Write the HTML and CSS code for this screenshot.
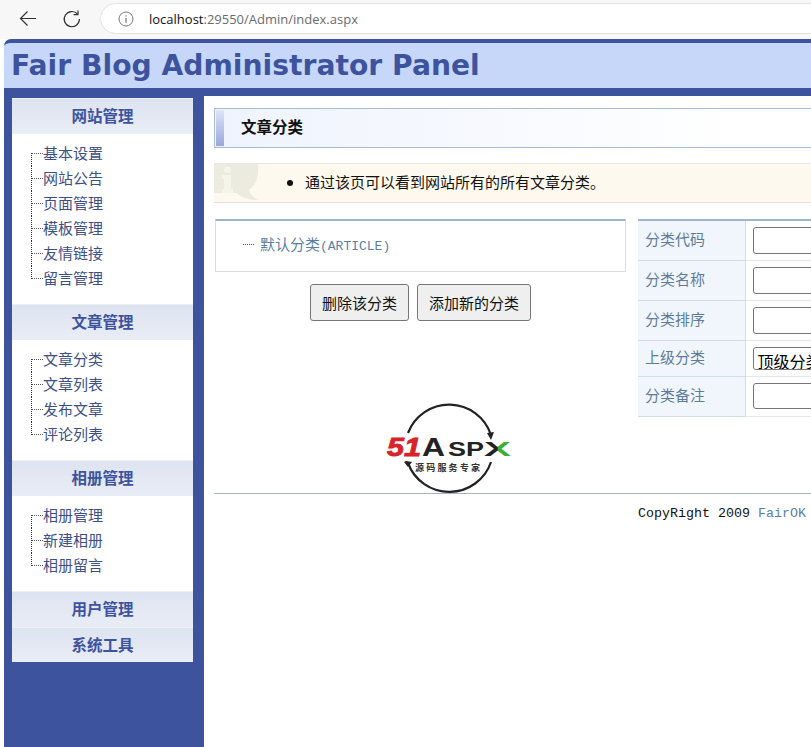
FILE: index.html
```html
<!DOCTYPE html>
<html lang="zh">
<head>
<meta charset="utf-8">
<title>Fair Blog Administrator Panel</title>
<link rel="stylesheet" href="styles.css">
</head>
<body>
<div class="toolbar">
  <svg class="nav-icon back" width="20" height="20" viewBox="0 0 20 20"><path d="M18 9.5H2.5M9.5 2.5l-7 7 7 7" fill="none" stroke="#333" stroke-width="1.2"/></svg>
  <svg class="nav-icon reload" width="20" height="20" viewBox="0 0 20 20"><path d="M15.6 5.2A7.6 7.6 0 1 0 17.4 10" fill="none" stroke="#333" stroke-width="1.2"/><path d="M16 1.5v4.2h-4.4" fill="none" stroke="#333" stroke-width="1.2"/></svg>
  <div class="address">
    <svg class="info" width="16" height="16" viewBox="0 0 16 16"><circle cx="8" cy="8" r="7" fill="none" stroke="#777" stroke-width="1"/><path d="M8 7v5M8 4.2v1.4" stroke="#777" stroke-width="1.2"/></svg>
    <span class="url"><span class="host">localhost</span>:29550/Admin/index.aspx</span>
  </div>
</div>
<div class="page">
  <header class="banner"><h1>Fair Blog Administrator Panel</h1></header>
  <div class="columns">
    <aside class="sidebar">
      <div class="menu">
        <h2 class="menu-title">网站管理</h2>
        <ul class="tree">
          <li>基本设置</li><li>网站公告</li><li>页面管理</li><li>模板管理</li><li>友情链接</li><li>留言管理</li>
        </ul>
        <h2 class="menu-title">文章管理</h2>
        <ul class="tree">
          <li>文章分类</li><li>文章列表</li><li>发布文章</li><li>评论列表</li>
        </ul>
        <h2 class="menu-title">相册管理</h2>
        <ul class="tree">
          <li>相册管理</li><li>新建相册</li><li>相册留言</li>
        </ul>
        <h2 class="menu-title">用户管理</h2>
        <h2 class="menu-title">系统工具</h2>
      </div>
    </aside>
    <main class="content">
      <div class="page-title"><span class="accent"></span><strong>文章分类</strong></div>
      <div class="notice">
        <svg class="notice-icon" width="46" height="38" viewBox="0 0 46 38"><path d="M0 0H44C45 10 43 21 35 26C36 30 39 33 44 36C35 36 27 33 22 29H0Z" fill="#ebebe0"/><rect x="10" y="3" width="7" height="6" rx="2" fill="#f6f5ea"/><path d="M8 11h9v14h2v4H8v-4h2V15H8z" fill="#f6f5ea"/></svg>
        <ul><li>通过该页可以看到网站所有的所有文章分类。</li></ul>
      </div>
      <div class="editor">
        <div class="left">
          <div class="tree-box"><span class="dash"></span><a>默认分类<span class="ascii">(ARTICLE)</span></a></div>
          <div class="actions"><button>删除该分类</button><button>添加新的分类</button></div>
          <svg class="logo" width="130" height="92" viewBox="0 0 130 92">
            <defs>
              <linearGradient id="x-fill" x1="0" x2="1" y1="0" y2="0">
                <stop offset="0.48" stop-color="#222"/><stop offset="0.52" stop-color="#3fae38"/>
              </linearGradient>
            </defs>
            <path d="M24 31A44 44 0 0 1 107 33" fill="none" stroke="#222" stroke-width="2.2"/>
            <path d="M103 31l4 7 3-8z" fill="#222"/>
            <path d="M107 60A44 44 0 0 1 24 61" fill="none" stroke="#222" stroke-width="2.2"/>
            <path d="M20 60l2-1 6 1-4 5z" fill="#222"/>
            <text x="3" y="54" textLength="34" lengthAdjust="spacingAndGlyphs" class="logo-51">51</text>
            <text x="38" y="54" textLength="23" lengthAdjust="spacingAndGlyphs" class="logo-a">A</text>
            <text x="64" y="54" textLength="36" lengthAdjust="spacingAndGlyphs" class="logo-sp">sp</text>
            <text x="100" y="54" textLength="27" lengthAdjust="spacingAndGlyphs" class="logo-x" fill="url(#x-fill)">x</text>
            <text x="31" y="69" class="logo-sub">源码服务专家</text>
          </svg>
        </div>
        <table class="form">
          <tr class="tall"><th>分类代码</th><td><input type="text"></td></tr>
          <tr class="tall"><th>分类名称</th><td><input type="text"></td></tr>
          <tr class="tall"><th>分类排序</th><td><input type="text"></td></tr>
          <tr class="short"><th>上级分类</th><td><select><option>顶级分类目录</option></select></td></tr>
          <tr class="tall last"><th>分类备注</th><td><input type="text"></td></tr>
        </table>
      </div>
      <footer class="copyright">CopyRight 2009 <a>FairOK</a></footer>
    </main>
  </div>
</div>
</body>
</html>
```
FILE: styles.css
```css
* { box-sizing: border-box; }
html, body { margin: 0; height: 747px; overflow: hidden; }
body { width: 811px; background: #fff; font-family: "Noto Sans CJK SC", sans-serif; }

.toolbar { height: 39px; background: #f7f7f7; display: flex; align-items: flex-start; position: relative; }
.nav-icon { flex: none; margin-top: 9px; }
.back { margin-left: 18px; }
.reload { margin-left: 24px; }
.address { width: 760px; flex: none; height: 31px; margin: 3px 0 0 18px; background: #fff; border: 1px solid #e3e3e3; border-radius: 16px; display: flex; align-items: center; padding-left: 17px; }
.url { margin-left: 15px; font: 13px "Open Sans", sans-serif; color: #6b6b6b; }
.host { color: #111; }

.page { width: 1100px; margin-left: 4px; }
.banner { height: 57px; background: #c6d7f9; border-top: 4px solid #3e539d; border-bottom: 8px solid #3e539d; border-top-left-radius: 7px; padding-left: 7px; }
.banner h1 { margin: 0; font: bold 28.2px/46px "DejaVu Sans", sans-serif; color: #3e539d; }

.columns { display: flex; height: 660px; }
.sidebar { width: 200px; flex: none; background: #3e539d; padding: 2px 11px 0 8px; }
.menu { background: #fff; }
.menu-title { margin: 0; height: 36px; font-size: 15.5px; line-height: 32px; font-weight: bold; text-align: center; color: #3e539d; background: linear-gradient(#dde3f0, #e9edf6); border-top: 1px solid #eef0f5; }
.menu-title:last-child { height: 35px; }
.tree { list-style: none; margin: 0; padding: 7px 0 13px 19px; }
.tree li { height: 25px; line-height: 24px; font-size: 15px; color: #3e4f85; padding-left: 12px; position: relative; }
.tree li::before { content: ""; position: absolute; left: 0; top: 12px; width: 12px; border-top: 1px dotted #555; }
.tree li::after { content: ""; position: absolute; left: 0; top: 0; height: 25px; border-left: 1px dotted #333; }
.tree li:first-child::after { top: 12px; height: 13px; }
.tree li:last-child::after { height: 13px; }

.content { width: 886px; flex: none; padding: 12px 0 0 10px; }
.page-title { height: 40px; border: 1px solid #a9bccf; background: linear-gradient(90deg, #eef3fd, #fff 60%); display: flex; align-items: center; padding: 1px; }
.accent { width: 8px; align-self: stretch; background: linear-gradient(#dfe4f7, #9aa6dc); }
.page-title strong { margin: 0 0 5px 17px; font-size: 15.5px; line-height: 22px; color: #111; }
.notice { height: 40px; margin-top: 15px; background: #fdf9ee; border-top: 1px solid #e8e8e0; border-bottom: 1px solid #e0e0d8; position: relative; display: flex; align-items: center; }
.notice-icon { position: absolute; left: 0; top: 0; }
.notice ul { margin: 0 0 3px; padding-left: 91px; font-size: 15px; line-height: 22px; color: #111; }

.editor { display: flex; margin-top: 16px; height: 275px; border-bottom: 1px solid #a4b4c2; }
.left { width: 424px; flex: none; padding-left: 1px; display: flex; flex-direction: column; }
.tree-box { flex: none; width: 411px; height: 53px; border: 1px solid #ddd; border-top: 2px solid #9fb5c7; padding: 0 0 5px 27px; display: flex; align-items: center; font: 15px/20px "Noto Sans CJK SC", sans-serif; }
.dash { width: 11px; border-top: 1px dotted #555; margin: 2px 6px 0 0; }
.tree-box a { color: #5b7fa3; }
.ascii { font: 13px "Liberation Mono", monospace; }
.actions { flex: none; display: flex; gap: 8px; margin: 12px 0 0 95px; }
.actions button { height: 37px; padding: 0 11px; font: 15px "Noto Sans CJK SC", sans-serif; color: #111; background: #efefef; border: 1px solid #767676; border-radius: 3px; }
.logo { margin: 81px 0 0 169px; flex: none; overflow: visible; }
.logo-51 { font: italic bold 25px "Liberation Sans", sans-serif; fill: #d8232a; stroke: #d8232a; stroke-width: 0.8px; }
.logo-a { font: bold 25px "Liberation Sans", sans-serif; fill: #222; }
.logo-sp { font: bold 20.6px "Liberation Sans", sans-serif; fill: #222; text-transform: uppercase; }
.logo-x { font: bold 20.6px "Liberation Sans", sans-serif; text-transform: uppercase; }
.logo-sub { font: bold 9px "Noto Sans CJK SC", sans-serif; fill: #333; letter-spacing: 2.2px; }

.form { width: 600px; flex: none; table-layout: fixed; height: 197px; border-collapse: collapse; border-top: 2px solid #9fb5c7; align-self: flex-start; }
.form th { width: 107px; padding: 0 0 3px 7px; text-align: left; font-weight: normal; font-size: 15px; line-height: 20px; color: #5e7b9a; background: #f1f6fd; border-right: 1px solid #d3dbe6; border-bottom: 1px solid #d3dbe6; }
.form td { padding: 0 0 0 7px; border-bottom: 1px solid #e4e8ee; }
.tall { height: 40px; }
.short { height: 36px; }
.form input { width: 300px; height: 27px; display: block; border: 1px solid #767676; border-radius: 3px; background: #fff; }
.last input { height: 26px; }
.form select { width: 200px; height: 23px; display: block; font-size: 16px; font-family: "Noto Sans CJK SC", sans-serif; background: #fff; border: 1px solid #767676; border-radius: 3px; padding: 0; }

.copyright { padding: 10px 0 0 424px; font: 13.33px/20px "Liberation Mono", monospace; color: #111; }
.copyright a { color: #5b7fa3; }
```
